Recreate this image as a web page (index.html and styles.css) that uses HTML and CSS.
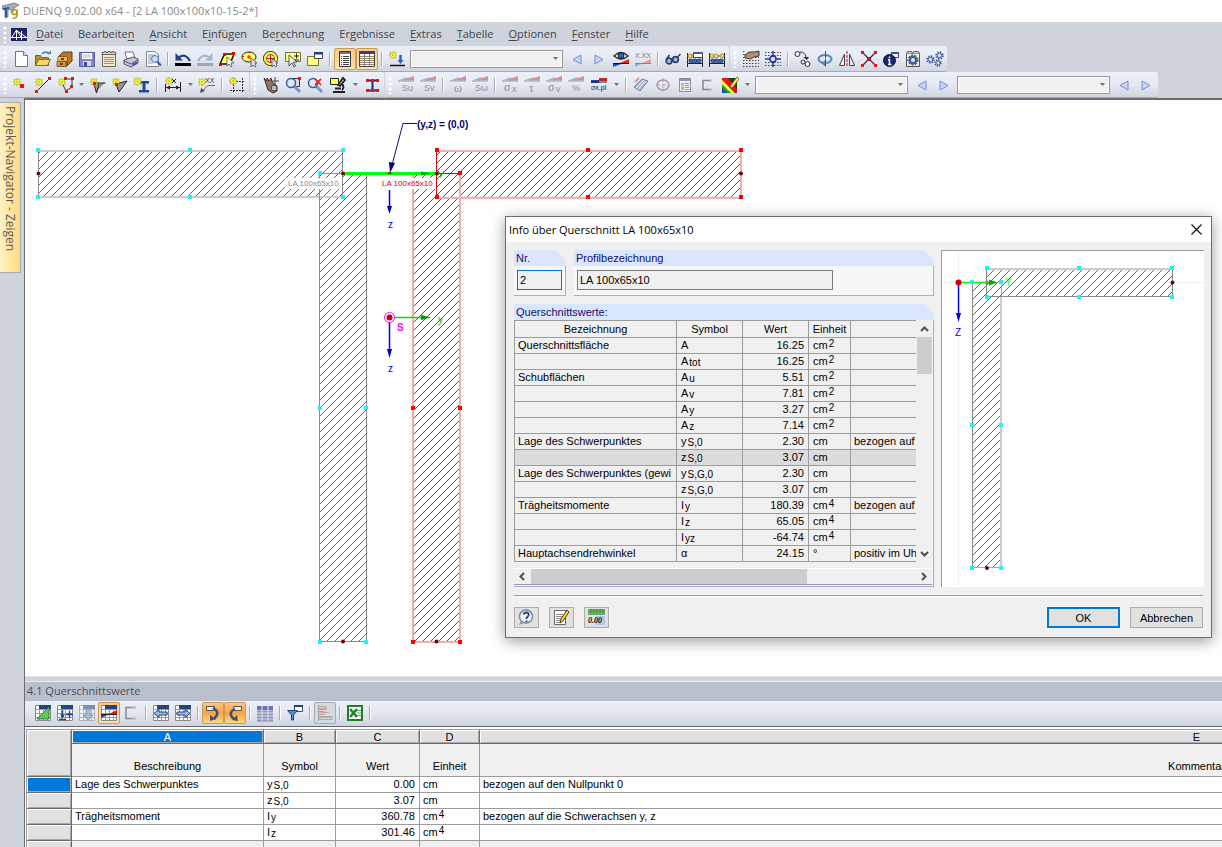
FILE: index.html
```html
<!DOCTYPE html>
<html lang="de">
<head>
<meta charset="utf-8">
<title>DUENQ 9.02.00 x64</title>
<link rel="stylesheet" href="styles.css">
</head>
<body>
<svg class="defs" aria-hidden="true">
  <defs>
    <symbol id="star" viewBox="0 0 9 9"><path d="M4.500 0L5.500 2.500 8 1 6.800 3.600 9 4.500 6.800 5.500 8 8 5.500 6.700 4.500 9 3.600 6.700 1 8 2.300 5.500 0 4.500 2.300 3.600 1 1 3.600 2.500Z" fill="#ffff38" stroke="#a9a612" stroke-width=".6"/><rect x="3.500" y="3.500" width="2" height="2" fill="#c9c51a"/></symbol>
    <symbol id="flag" viewBox="0 0 18 9"><path d="M1 4.500L10 1v3.500z" fill="#9fb4da"/><path d="M8 4.500V3L17 0v4.500z" fill="#d98f8f"/><path d="M1 5h16" stroke="#9aa0aa"/></symbol>
    <symbol id="prev" viewBox="0 0 18 18"><path d="M13 5L5 9.500 13 14z" fill="#c5d5fb" stroke="#7c8fce"/></symbol>
    <symbol id="next" viewBox="0 0 18 18"><path d="M5 5l8 4.500L5 14z" fill="#c5d5fb" stroke="#7c8fce"/></symbol>
    <symbol id="drop" viewBox="0 0 7 4"><path d="M0 0h7L3.500 4z" fill="#707070"/></symbol>
    <symbol id="sheet" viewBox="0 0 18 18"><path d="M1.500 1.500h15v15h-15z" fill="#fff" stroke="#888"/><path d="M1.500 5.500h15M1.500 9.500h15M1.500 13.500h15M5.500 1.500v15M9.500 1.500v15M13.500 1.500v15" stroke="#999"/><path d="M5 1h12v4H5z" fill="#24427f"/></symbol>
    <symbol id="lens" viewBox="0 0 18 18"><path d="M10 10l6 6" stroke="#7d94c8" stroke-width="3"/><circle cx="7" cy="7" r="4.500" fill="#dbe9fb" stroke="#365a9c" stroke-width="1.500"/></symbol>
    <symbol id="abacus" viewBox="0 0 18 18"><path d="M1.500 3v14M16.500 3v14M1 13.500h16" stroke="#222" fill="none"/><path d="M1 6h16M1 10h16" stroke="#555"/><g fill="#f0dd6a" stroke="#8a7a1f" stroke-width=".7"><circle cx="4" cy="6" r="2"/><circle cx="8" cy="6" r="2"/><circle cx="14" cy="6" r="2"/></g><g fill="#3b66c4" stroke="#16306d" stroke-width=".7"><circle cx="5" cy="11" r="2"/><circle cx="9" cy="11" r="2"/><circle cx="13" cy="11" r="2"/></g></symbol>
    <symbol id="gear" viewBox="0 0 10 10"><circle cx="5" cy="5" r="3.700" fill="none" stroke="#3a5795" stroke-width="2" stroke-dasharray="1.500 1.400"/><circle cx="5" cy="5" r="2.500" fill="#b9cdf3" stroke="#3a5795"/><circle cx="5" cy="5" r="1" fill="#fff"/></symbol>
    <pattern id="hatch" width="8" height="8" patternUnits="userSpaceOnUse"><path d="M-1 9L9-1" stroke="#222" stroke-width=".7" shape-rendering="auto"/></pattern>
    <pattern id="hatch-red" width="8" height="8" patternUnits="userSpaceOnUse"><path d="M-1 9L9-1" stroke="#7b0a14" stroke-width=".8" shape-rendering="auto"/></pattern>
  </defs>
</svg>

<header class="titlebar">
  <svg width="18" height="18" viewBox="0 0 18 18"><path d="M0 4l12-3 5 2-5 3v3l-3 1V7L6 8v7l-3 1V8L0 7z" fill="#a9adb3" stroke="#666a70" stroke-width=".7"/><path d="M1 7l6-1M4 7v8" stroke="#2b59b0" stroke-width="2"/><circle cx="12.500" cy="10" r="2.500" fill="none" stroke="#c59320" stroke-width="1.700"/><path d="M15 8v6q-1 3-4.500 2" fill="none" stroke="#c59320" stroke-width="1.700"/></svg>
  <h1>DUENQ 9.02.00 x64 - [2 LA 100x100x10-15-2*]</h1>
</header>

<nav class="menubar">
  <i class="grip"></i>
  <svg width="16" height="13" viewBox="0 0 16 13"><path d="M0 0h16v13H0z" fill="#20225f"/><path d="M0 9.500h16M5.500 2v10M10.500 3v9M1 9l4.500-7L10 9M6 3l9 6" fill="none" stroke="#fff"/></svg>
  <a href="#"><u>D</u>atei</a><a href="#">Bearbeite<u>n</u></a><a href="#"><u>A</u>nsicht</a><a href="#">E<u>i</u>nfügen</a><a href="#">Be<u>r</u>echnung</a><a href="#">Er<u>g</u>ebnisse</a><a href="#"><u>E</u>xtras</a><a href="#"><u>T</u>abelle</a><a href="#"><u>O</u>ptionen</a><a href="#"><u>F</u>enster</a><a href="#"><u>H</u>ilfe</a>
</nav>

<div class="toolrow">
  <div class="toolbar">
    <i class="grip"></i>
    <button class="tb" aria-label="Neu"><svg viewBox="0 0 18 18"><path d="M3.500 1.500h8l4 4v11h-12z" fill="#fff" stroke="#707684"/><path d="M11.500 1.500v4h4" fill="#dde3ee" stroke="#707684"/></svg></button>
    <button class="tb" aria-label="Öffnen"><svg viewBox="0 0 18 18"><path d="M1.500 15.500V5.500h5l1 2h7v8z" fill="#b8912c" stroke="#7b6018"/><path d="M1.500 15.500l3-6h12l-3 6z" fill="#f3d56d" stroke="#8a6c1e"/><path d="M8 4q4-4 7 0" fill="none" stroke="#4878b8" stroke-width="1.500"/><path d="M13 4h4v-3.500z" fill="#4878b8"/></svg></button>
    <button class="tb" aria-label="Projekt"><svg viewBox="0 0 18 18"><path d="M2 7l5-5h9v9l-5 5H2z" fill="#b57628" stroke="#65400f"/><path d="M2 7h9v9" fill="none" stroke="#65400f"/><path d="M2 7h9v4H2z" fill="#e4b164"/><path d="M1 11.500h9v5H1z" fill="#d69843" stroke="#65400f" stroke-width=".7"/><path d="M5 9h3M4 14h3" stroke="#3d2607" stroke-width="1.500"/></svg></button>
    <button class="tb" aria-label="Speichern"><svg viewBox="0 0 18 18"><path d="M1.500 2.500h15v14h-15z" fill="#8287cf" stroke="#555c9d"/><path d="M4 3h10v6H4z" fill="#fff"/><path d="M5 5h8M5 7h8" stroke="#b7bac8"/><path d="M5 11h8v5H5z" fill="#d9dbe6"/><path d="M6 12h3v4H6z" fill="#474c88"/></svg></button>
    <button class="tb" aria-label="Protokoll"><svg viewBox="0 0 18 18"><path d="M2.500 4.500h13v12h-13z" fill="#f6ead2" stroke="#6e655b"/><path d="M2 4.500V2.500h2v-1h2v1h2v-1h2v1h2v-1h2v1h2v2z" fill="#d6d1c8" stroke="#6e655b"/><path d="M4 7.500h10M4 9.500h10M4 11.500h10M4 13.500h10" stroke="#9c8e78"/></svg></button>
    <button class="tb" aria-label="Drucken"><svg viewBox="0 0 18 18"><path d="M3 2h8l2 6-8 1z" fill="#fff" stroke="#6d6d74"/><path d="M2 10l9-3 5 2v4l-7 4-7-3z" fill="#c3c5d2" stroke="#525462"/><path d="M2 11l7 3 7-4" fill="none" stroke="#555869"/><path d="M10 14l5-2.500v2L11 16z" fill="#504fa0"/></svg></button>
    <button class="tb" aria-label="Druckvorschau"><svg viewBox="0 0 18 18"><path d="M2.500 1.500h8l4 3v12h-12z" fill="#fff" stroke="#808690"/><path d="M4 5h7M4 7h4M4 9h3M4 11h3M4 13h5" stroke="#8f949c"/><circle cx="11" cy="9" r="3.500" fill="#c9def7" stroke="#4877b5"/><path d="M13 11.500l4 4" stroke="#2e62ad" stroke-width="2"/></svg></button>
    <i class="sep"></i>
    <button class="tb" aria-label="Rückgängig"><svg viewBox="0 0 18 18"><path d="M4 8q7-6 12 3" fill="none" stroke="#23407f" stroke-width="2.200"/><path d="M1.500 3v7.500H9z" fill="#23407f"/><path d="M1 13h16v3H1z" fill="#000"/></svg></button>
    <button class="tb" aria-label="Wiederholen"><svg viewBox="0 0 18 18"><path d="M14 8Q7 2 2 11" fill="none" stroke="#a4b7d3" stroke-width="2.200"/><path d="M16.500 3v7.500H9z" fill="#a4b7d3"/><path d="M1 13h16v3H1z" fill="#a1a5ad"/></svg></button>
    <button class="tb" aria-label="Auswahl Rhomboid"><svg viewBox="0 0 18 18"><path d="M6.500 4H16l-4 10H2z" fill="#ffff70" stroke="#111" stroke-width="1.500"/><path d="M5 3h3v3H5zM14 2h3v3h-3zM1 13h3v3H1z" fill="#e00"/><path d="M9 7v9l2-2 2 3 1-1-1-3h3z" fill="#fff" stroke="#444" stroke-width=".7"/></svg></button>
    <button class="tb" aria-label="Auswahl Ellipse"><svg viewBox="0 0 18 18"><ellipse cx="9" cy="7" rx="7" ry="5" fill="#ffff70" stroke="#222"/><path d="M9 5v4M7 7h4M2 6.500h2M8.500 2.500h2" stroke="#e00"/><path d="M11 8v9l2-2 2 2 1-1-1-3h2z" fill="#ddd" stroke="#444" stroke-width=".7"/></svg></button>
    <button class="tb" aria-label="Auswahl Kreis"><svg viewBox="0 0 18 18"><circle cx="8.500" cy="8.500" r="5.500" fill="#fff" stroke="#222" stroke-width="4"/><circle cx="8.500" cy="8.500" r="5.500" fill="none" stroke="#ffef3a" stroke-width="2.500"/><path d="M8.500 5v7M5 8.500h7" stroke="#e00"/><path d="M10 9v8l2-2 2 2 1-1-1-3h2z" fill="#ddd" stroke="#444" stroke-width=".7"/></svg></button>
    <button class="tb" aria-label="Auswahl hinzufügen"><svg viewBox="0 0 18 18"><path d="M1.500 2.500h15v9h-15z" fill="#ffff7d" stroke="#77743b"/><path d="M10 6h5M12.500 3.500v5M10 10h5" stroke="#222"/><path d="M5 5v11l3-3 2 4 1.500-1-2-4H13z" fill="#eee" stroke="#333" stroke-width=".8"/></svg></button>
    <button class="tb" aria-label="Fenster"><svg viewBox="0 0 18 18"><path d="M1.500 6.500h11v9h-11z" fill="#ffff7d" stroke="#77743b"/><path d="M8.500 2.500h8v6h-8z" fill="#fff" stroke="#444"/><path d="M8 2h9v2.500H8z" fill="#24427f"/></svg></button>
    <i class="sep"></i>
    <button class="tb on" aria-label="Navigator"><svg viewBox="0 0 18 18"><path d="M3.500 1.500h11v15h-11z" fill="#fff" stroke="#333"/><path d="M4 2h10v2H4z" fill="#777"/><path d="M5 6.500h1M5 8.500h1M5 10.500h1M5 12.500h1M5 14.500h1M7 6.500h6M7 8.500h6M7 10.500h6M7 12.500h6M7 14.500h6" stroke="#444"/></svg></button>
    <button class="tb on" aria-label="Tabellen"><svg viewBox="0 0 18 18"><path d="M1.500 1.500h15v15h-15z" fill="#fff" stroke="#444"/><path d="M1 1h16v3H1z" fill="#39456d"/><path d="M2 6.500h14M2 8.500h14M2 10.500h14M2 12.500h14M2 14.500h14M6.500 4v12M11.500 4v12" stroke="#8d8574"/></svg></button>
    <i class="sep"></i>
    <button class="tb" aria-label="Lastfall"><svg viewBox="0 0 18 18"><use href="#star" x="1" y="1" width="8" height="8"/><path d="M12.500 5v5" stroke="#3460b5" stroke-width="2.500"/><path d="M9.500 10h6l-3 4z" fill="#3460b5"/><path d="M2 15.500h15" stroke="#111" stroke-width="1.500"/></svg></button>
    <span class="combo"><select aria-label="Lastfall wählen"></select><svg viewBox="0 0 7 4"><use href="#drop"/></svg></span>
    <button class="tb" aria-label="Zurück"><svg viewBox="0 0 18 18"><use href="#prev"/></svg></button>
    <button class="tb" aria-label="Weiter"><svg viewBox="0 0 18 18"><use href="#next"/></svg></button>
    <button class="tb" aria-label="Ergebnisse anzeigen"><svg viewBox="0 0 18 18"><path d="M2 6q7-7 14 0-7 6-14 0z" fill="#fff" stroke="#222" stroke-width="1.300"/><circle cx="9" cy="5.500" r="3" fill="#3165bd" stroke="#111"/><path d="M1 15.500v-2h10L1 17z" fill="#2644c8"/><path d="M8 13l9-4v4z" fill="#e22"/><path d="M1 13.500h16" stroke="#111"/></svg></button>
    <button class="tb" aria-label="Werte anzeigen"><svg viewBox="0 0 18 18"><text x="1" y="8" class="t7" fill="#777">X.XX</text><path d="M1 17v-4h9z" fill="#a3add8"/><path d="M8 13l9-4v4z" fill="#e79a9a"/><path d="M1 13.500h16" stroke="#888"/></svg></button>
    <i class="sep"></i>
    <button class="tb" aria-label="Brille"><svg viewBox="0 0 18 18"><circle cx="5" cy="11" r="2.800" fill="#a9bde4" stroke="#2c3f70" stroke-width="1.800"/><circle cx="11.500" cy="9.500" r="2.800" fill="#a9bde4" stroke="#2c3f70" stroke-width="1.800"/><path d="M2.500 9l3-4M13.500 7l3-3M8 9h1" stroke="#2c3f70" stroke-width="1.500"/></svg></button>
    <button class="tb" aria-label="Berechnung Fenster"><svg viewBox="0 0 18 18"><use href="#abacus"/><path d="M7.500 2.500h9v5h-9z" fill="#fff" stroke="#444"/><path d="M7 2h10v2H7z" fill="#555d78"/></svg></button>
    <button class="tb" aria-label="Berechnung"><svg viewBox="0 0 18 18"><use href="#abacus"/></svg></button>
  </div>
  <div class="toolbar">
    <i class="grip"></i>
    <button class="tb" aria-label="Raster bearbeiten"><svg viewBox="0 0 18 18"><path d="M1 7.500h16M1 10.500h16M1 13.500h16M1 16.500h16M1 4.500h4M1 1.500h3" stroke="#444" stroke-dasharray="1.500 1.500"/><path d="M3 5l4-3h6l4-1v5l-5 1-4 2-5-1z" fill="#b38e70" stroke="#4d3526"/></svg></button>
    <button class="tb" aria-label="Raster"><svg viewBox="0 0 18 18"><path d="M1 2.500h16M1 5.500h16M1 12.500h16M1 15.500h16" stroke="#444" stroke-dasharray="1.500 1.500"/><path d="M9 1v16M1 9h16" stroke="#2434a4" stroke-width="1.500"/><circle cx="9" cy="9" r="3" fill="#dfe5f5" stroke="#2434a4" stroke-width="1.500"/></svg></button>
    <i class="sep"></i>
    <button class="tb" aria-label="Verschieben"><svg viewBox="0 0 18 18"><g fill="#eee" stroke="#333"><circle cx="3.500" cy="4" r="2.500"/><circle cx="13.500" cy="14" r="2.500"/><circle cx="9" cy="12" r="2"/></g><path d="M6 2q5 0 6 5" fill="none" stroke="#333"/><path d="M9 7h6l-2 3z" fill="#333"/></svg></button>
    <button class="tb" aria-label="Drehen"><svg viewBox="0 0 18 18"><ellipse cx="9" cy="9" rx="6.500" ry="4" fill="none" stroke="#5f86be" stroke-width="2"/><path d="M10 10l-5 3 5 4z" fill="#5f86be"/><path d="M9.500 1v16" stroke="#e00" stroke-dasharray="3 1"/></svg></button>
    <button class="tb" aria-label="Spiegeln"><svg viewBox="0 0 18 18"><path d="M6.500 4v11.500H1.500zM11.500 4v11.500h5z" fill="#eee" stroke="#444"/><path d="M9 1v16" stroke="#e00" stroke-dasharray="3 1"/></svg></button>
    <button class="tb" aria-label="Skalieren"><svg viewBox="0 0 18 18"><path d="M2 2l14 14M16 2L2 16" stroke="#333" stroke-width="1.300"/><path d="M1 1h3v3H1zM14 1h3v3h-3zM1 14h3v3H1zM14 14h3v3h-3z" fill="#e11"/><path d="M7.500 7.500h3v3h-3z" fill="#e11" stroke="#600" stroke-width=".6"/></svg></button>
    <button class="tb" aria-label="Info"><svg viewBox="0 0 18 18"><path d="M9.500 2.500h7v5h-7z" fill="#fff" stroke="#444"/><path d="M9 2h8v2H9z" fill="#3c5186"/><circle cx="7.500" cy="10.500" r="6" fill="#19266c" stroke="#0d1442"/><path d="M7.500 6.500v1.800M7.500 9.500v5M6 14.500h3.500M6 9.700h2" stroke="#fff" stroke-width="1.500"/></svg></button>
    <button class="tb" aria-label="Einstellungen"><svg viewBox="0 0 18 18"><path d="M2.500 3.500h13v13h-13z" fill="#f4ecd9" stroke="#555"/><path d="M2.500 3.500l1-2h4l1 2 1-2h5l1 2" fill="#d6d1c8" stroke="#666"/><circle cx="9" cy="10" r="4.500" fill="#3f5f9f"/><circle cx="9" cy="10" r="5" fill="none" stroke="#222a44" stroke-dasharray="2 1.500"/><circle cx="9" cy="10" r="2" fill="#dce7fa"/></svg></button>
    <button class="tb" aria-label="Optionen"><svg viewBox="0 0 18 18"><use href="#gear" x="0" y="5" width="9" height="9"/><use href="#gear" x="9" y="1" width="9" height="9"/><use href="#gear" x="8" y="9" width="8" height="8"/></svg></button>
  </div>
</div>

<div class="toolrow">
  <div class="toolbar">
    <i class="grip"></i>
    <button class="tb" aria-label="Knoten"><svg viewBox="0 0 18 18"><use href="#star" x="1" y="2" width="8" height="8"/><path d="M8 8h4v4H8z" fill="#e11"/></svg></button>
    <button class="tb" aria-label="Linie"><svg viewBox="0 0 18 18"><path d="M3 15L15 3" stroke="#222"/><use href="#star" x="1" y="2" width="8" height="8"/><path d="M14 1h3v3h-3zM1 14h3v3H1z" fill="#e11"/></svg></button>
    <button class="tb" aria-label="Element"><svg viewBox="0 0 18 18"><path d="M9 3h7v8l-6 4-3-6" fill="none" stroke="#333"/><use href="#star" x="2" y="2" width="8" height="8"/><path d="M8 1h3v3H8zM15 1h3v3h-3zM14 9h3v3h-3zM9 14h3v3H9z" fill="#e11"/></svg></button>
    <i class="arrow"><svg viewBox="0 0 7 4"><use href="#drop"/></svg></i>
    <button class="tb" aria-label="Querschnitt oben"><svg viewBox="0 0 18 18"><path d="M5 7h11L7 16z" fill="#999" stroke="none"/><path d="M5 7h11.500M5 8l2.500 9L10 8" fill="none" stroke="#222"/><use href="#star" x="1" y="2" width="8" height="8"/><path d="M4 6h3v3H4z" fill="#e11"/></svg></button>
    <button class="tb" aria-label="Querschnitt unten"><svg viewBox="0 0 18 18"><path d="M5 8L16 5 8 16z" fill="#999" stroke="#222"/><use href="#star" x="1" y="2" width="8" height="8"/><path d="M4 7h3v3H4z" fill="#e11"/></svg></button>
    <button class="tb" aria-label="Profil"><svg viewBox="0 0 18 18"><path d="M6 5h10v2.500h-3.500V14H16v2.500H6V14h3.500V7.500H6z" fill="#23489a"/><use href="#star" x="0" y="1" width="9" height="9"/></svg></button>
    <i class="sep"></i>
    <button class="tb wide" aria-label="Bemaßung"><svg viewBox="0 0 18 18"><path d="M1.500 8v8M16.500 6v10M2 11.500h14M8 3l4 4M12 3L8 7" stroke="#222"/><path d="M2 11.500l4-2v4zM16 11.500l-4-2v4z" fill="#222"/><use href="#star" x="1" y="1" width="8" height="8"/></svg></button>
    <i class="arrow"><svg viewBox="0 0 7 4"><use href="#drop"/></svg></i>
    <button class="tb" aria-label="Kommentar"><svg viewBox="0 0 18 18"><text x="7" y="7" class="t7" fill="#333">XX</text><path d="M17 9.500H10L3 16" fill="none" stroke="#666"/><path d="M2 17l1-5 4 3z" fill="#555"/><use href="#star" x="0" y="2" width="8" height="8"/></svg></button>
    <i class="sep"></i>
    <button class="tb" aria-label="Hilfslinien"><svg viewBox="0 0 18 18"><path d="M5.500 2v15M14.500 2v15M2 5.500h15M2 14.500h15" stroke="#333" stroke-dasharray="2 1"/><use href="#star" x="1" y="1" width="8" height="8"/></svg></button>
  </div>
  <div class="toolbar">
    <i class="grip"></i>
    <button class="tb" aria-label="Ansicht verschieben"><svg viewBox="0 0 18 18"><path d="M2 2l3 3V2l2 3 2-3 1 4 5 4v5l-4 2-5-3z" fill="#8c7565" stroke="#3e322b"/><circle cx="12" cy="12" r="3" fill="#bbb" stroke="#444"/><path d="M13 1v9M9 5h8" stroke="#444"/></svg></button>
    <button class="tb" aria-label="Fenster vergrößern"><svg viewBox="0 0 18 18"><path d="M6.500 2.500h9v8h-9z" fill="#ddd" stroke="#333"/><use href="#lens"/><path d="M14 1h3v3h-3z" fill="#e11"/></svg></button>
    <button class="tb" aria-label="Alles zeigen"><svg viewBox="0 0 18 18"><use href="#lens"/><path d="M9 9l6-6M9 3l6 6" stroke="#e11" stroke-width="1.700"/></svg></button>
    <button class="tb wide" aria-label="Modell"><svg viewBox="0 0 18 18"><path d="M9 9l5-7 2 2-5 6zM13 8q3 3 0 6" fill="none" stroke="#222" stroke-width="1.800"/><path d="M4 16h12M6 12.500h6" stroke="#222" stroke-width="2"/><path d="M1.500 2.500h8v6h-8z" fill="#ffff55" stroke="#222"/></svg></button>
    <i class="arrow"><svg viewBox="0 0 7 4"><use href="#drop"/></svg></i>
    <button class="tb" aria-label="Querschnitt"><svg viewBox="0 0 18 18"><path d="M4 4.500h11M4 14.500h11M9.500 5v9" stroke="#1b2a7a" stroke-width="2"/><path d="M3 3h3v3H3zM8 3h3v3H8zM13 3h3v3h-3zM3 13h3v3H3zM8 13h3v3H8zM13 13h3v3h-3z" fill="#e11"/></svg></button>
  </div>
  <div class="toolbar">
    <i class="grip"></i>
    <button class="tb" aria-label="Su"><svg viewBox="0 0 18 18"><use href="#flag" width="18" height="9"/><text x="5" y="15" class="t9">Su</text></svg></button>
    <button class="tb" aria-label="Sv"><svg viewBox="0 0 18 18"><use href="#flag" width="18" height="9"/><text x="5" y="15" class="t9">Sv</text></svg></button>
    <i class="sep"></i>
    <button class="tb" aria-label="Omega"><svg viewBox="0 0 18 18"><use href="#flag" width="18" height="9"/><text x="5" y="16" class="t12">ω</text></svg></button>
    <button class="tb" aria-label="S Omega"><svg viewBox="0 0 18 18"><use href="#flag" width="18" height="9"/><text x="4" y="15" class="t9">Sω</text></svg></button>
    <i class="sep"></i>
    <button class="tb" aria-label="Sigma x"><svg viewBox="0 0 18 18"><use href="#flag" width="18" height="9"/><text x="3" y="15" class="t12">σ</text><text x="11" y="16" class="t9">x</text></svg></button>
    <button class="tb" aria-label="Tau"><svg viewBox="0 0 18 18"><use href="#flag" width="18" height="9"/><text x="6" y="16" class="t12">τ</text></svg></button>
    <button class="tb" aria-label="Sigma v"><svg viewBox="0 0 18 18"><use href="#flag" width="18" height="9"/><text x="3" y="15" class="t12">σ</text><text x="11" y="16" class="t9">v</text></svg></button>
    <button class="tb" aria-label="Prozent"><svg viewBox="0 0 18 18"><use href="#flag" width="18" height="9"/><text x="5" y="15" class="t9">%</text></svg></button>
    <button class="tb wide" aria-label="Sigma x plastisch"><svg viewBox="0 0 18 18"><path d="M1 4h8v3H1z" fill="#23489a"/><path d="M9 2h8v3H9z" fill="#c9281f"/><path d="M1 6h16" stroke="#222"/><text x="1" y="14" class="t7 dark">σx,pl</text></svg></button>
    <i class="arrow"><svg viewBox="0 0 7 4"><use href="#drop"/></svg></i>
    <i class="sep"></i>
    <button class="tb" aria-label="Diagramm"><svg viewBox="0 0 18 18"><path d="M2 11l8-8 6 2-8 10z" fill="#aebbd0" stroke="#74829b"/><path d="M4 12l8-8M6 13l8-8" stroke="#e8edf5"/><path d="M3 6l4-4" stroke="#d99" stroke-width="2"/></svg></button>
    <button class="tb" aria-label="Kern"><svg viewBox="0 0 18 18"><ellipse cx="9" cy="9" rx="6" ry="5" fill="none" stroke="#999" stroke-width="1.300"/><path d="M9 2v14M2 9h14" stroke="#c99" stroke-dasharray="4 2"/></svg></button>
    <button class="tb" aria-label="Farbskala"><svg viewBox="0 0 18 18"><path d="M3.500 2.500h11v13h-11z" fill="#eef0f5" stroke="#8b8f98"/><path d="M4 3h10v2H4z" fill="#8e9ab5"/><path d="M5 7h3v2H5z" fill="#e99"/><path d="M5 9h3v2H5z" fill="#dd8"/><path d="M5 11h3v3H5z" fill="#8c9"/><path d="M9 7.500h4M9 9.500h4M9 11.500h4M9 13.500h4" stroke="#999"/></svg></button>
    <button class="tb" aria-label="Profil offen"><svg viewBox="0 0 18 18"><path d="M14 4.500H5v9h9" fill="none" stroke="#888" stroke-width="1.500"/><path d="M12 4.500h2M12 13.500h2" stroke="#ccc" stroke-width="2"/></svg></button>
    <button class="tb wide" aria-label="Farben"><svg viewBox="0 0 18 18"><path d="M1 2h15v15H1z" fill="#14401c"/><path d="M1 2h6l9 11v4L1 5z" fill="#e11"/><path d="M1 4l13 13H9L1 9z" fill="#ff3"/><path d="M1 8l9 9H6l-5-5z" fill="#1fa43a"/><path d="M1 12l5 5H1z" fill="#24b"/><path d="M16 1l-6 8-1 3 3-1 6-8z" fill="#ffe56a" stroke="#775a10" stroke-width=".8"/></svg></button>
    <i class="arrow"><svg viewBox="0 0 7 4"><use href="#drop"/></svg></i>
    <span class="combo"><select aria-label="Ergebnisart"></select><svg viewBox="0 0 7 4"><use href="#drop"/></svg></span>
    <button class="tb" aria-label="Zurück"><svg viewBox="0 0 18 18"><use href="#prev"/></svg></button>
    <button class="tb" aria-label="Weiter"><svg viewBox="0 0 18 18"><use href="#next"/></svg></button>
    <span class="combo"><select aria-label="Stelle"></select><svg viewBox="0 0 7 4"><use href="#drop"/></svg></span>
    <button class="tb" aria-label="Zurück"><svg viewBox="0 0 18 18"><use href="#prev"/></svg></button>
    <button class="tb" aria-label="Weiter"><svg viewBox="0 0 18 18"><use href="#next"/></svg></button>
  </div>
</div>

<div class="main">
  <aside class="rail"><button class="navtab">Projekt-Navigator - Zeigen</button></aside>
  <div class="work">
    <section class="canvas">
      <svg class="drawing" width="1197" height="576" viewBox="25 100 1197 576">
        <g shape-rendering="crispEdges">
          <path d="M38.500 150.500H343v47H38.500zM343 174h23.500v467.500H319.500V197H343z" fill="url(#hatch)"/>
          <path d="M38 150.500h305M38 196.500h305" stroke="#ccc" stroke-width="2"/>
          <path d="M38.500 150v47M319.500 174v467M366.500 174v467M319 641.500h47M319 173.500h24M342.500 150v47" stroke="#8d8d8d" fill="none"/>
          <path d="M436.500 150.500H741v47H436.500zM413.500 174h23v23h23.500v444.500h-46.500z" fill="url(#hatch-red)"/>
          <path d="M437 150.500h304M437 197.500h304M740.500 150v47M413 174v467M460 174v467M413 641.500h47" stroke="#f2aeb2" stroke-width="2"/>
          <path d="M436.500 150v47M437 173.500h23" stroke="#e00000"/>
        </g>
        <path d="M285 178h57v11h-57zM380 178h56v11h-56z" fill="#fff"/>
        <text x="288" y="186" class="lbl gray">LA 100x65x10</text>
        <text x="382" y="186" class="lbl red">LA 100x65x10</text>
        <path d="M343 173.500h94" stroke="#0f0" stroke-width="3"/><path d="M421 171.500l9 2-9 2z" fill="#009a00"/>
        <path d="M438 171l3 4M444 171l-4 7" stroke="#00d000"/>
        <g fill="#22f2f7"><path d="M36 148h4v4h-4zM188 148h4v4h-4zM341 148h4v4h-4zM36 195h4v4h-4zM188 195h4v4h-4zM341 195h4v4h-4zM318 171h4v4h-4zM318 406h4v4h-4zM364 406h4v4h-4zM318 640h4v4h-4zM364 640h4v4h-4z"/></g>
        <g fill="#f00"><path d="M435 148h4v4h-4zM586 148h4v4h-4zM739 148h4v4h-4zM435 195h4v4h-4zM586 195h4v4h-4zM739 195h4v4h-4zM458 171h4v4h-4zM411 406h4v4h-4zM458 406h4v4h-4zM411 640h4v4h-4zM458 640h4v4h-4z"/></g>
        <g fill="#700"><circle cx="38.500" cy="173.500" r="2"/><circle cx="343" cy="173.500" r="2"/><circle cx="437" cy="173.500" r="2"/><circle cx="741" cy="173.500" r="2"/><circle cx="343" cy="641.500" r="2"/><circle cx="436.500" cy="641.500" r="2"/></g>
        <path d="M417 123.500h-14L392 165" fill="none" stroke="#101078"/><path d="M389 162l6 1-5 10z" fill="#000080"/>
        <path d="M387 174q2-4 5 0z" fill="#d00"/>
        <text x="417" y="128" class="origin">(y,z) = (0,0)</text>
        <g stroke="#00f" stroke-width="1.500"><path d="M389.500 190v17M389.500 318v34"/></g>
        <path d="M387 206h5l-2.500 8zM387 349h5l-2.500 9z" fill="#0000c8"/>
        <text x="388" y="228" class="axis">z</text><text x="388" y="372" class="axis">z</text>
        <path d="M390 317.500h34" stroke="#0d0" stroke-width="1.500"/><path d="M421 315l10 2.500-10 2.500z" fill="#009a00"/>
        <text x="438" y="323" class="axis green">y</text>
        <circle cx="389.500" cy="317.500" r="5" fill="#fff" stroke="#f0f"/><circle cx="389.500" cy="317.500" r="3" fill="#c80010"/>
        <text x="397" y="331" class="cg">S</text>
      </svg>

      <section class="dialog" role="dialog" aria-labelledby="dlg-title">
        <header class="dlg-head"><h2 id="dlg-title">Info über Querschnitt LA 100x65x10</h2><button class="close" aria-label="Schließen"><svg width="11" height="11" viewBox="0 0 11 11"><path d="M.5.500l10 10M10.500.500l-10 10" stroke="#111" stroke-width="1.200"/></svg></button></header>
        <div class="dlg-body">
          <div class="left">
            <div class="pair">
              <div class="group nr"><label class="cap" for="nr">Nr.</label><div class="gbody"><input id="nr" class="focus" value="2"></div></div>
              <div class="group prof"><label class="cap" for="prof">Profilbezeichnung</label><div class="gbody"><input id="prof" value="LA 100x65x10" readonly></div></div>
            </div>
            <div class="group">
              <h3 class="cap">Querschnittswerte:</h3>
              <div class="tview">
                <table class="props">
                  <colgroup><col class="c1"><col class="c2"><col class="c2"><col class="c3"><col></colgroup>
                  <thead><tr><th>Bezeichnung</th><th>Symbol</th><th>Wert</th><th>Einheit</th><th></th></tr></thead>
                  <tbody>
                    <tr><td>Querschnittsfläche</td><td>A</td><td>16.25</td><td>cm<sup>2</sup></td><td></td></tr>
                    <tr><td></td><td>A<sub>tot</sub></td><td>16.25</td><td>cm<sup>2</sup></td><td></td></tr>
                    <tr><td>Schubflächen</td><td>A<sub>u</sub></td><td>5.51</td><td>cm<sup>2</sup></td><td></td></tr>
                    <tr><td></td><td>A<sub>v</sub></td><td>7.81</td><td>cm<sup>2</sup></td><td></td></tr>
                    <tr><td></td><td>A<sub>y</sub></td><td>3.27</td><td>cm<sup>2</sup></td><td></td></tr>
                    <tr><td></td><td>A<sub>z</sub></td><td>7.14</td><td>cm<sup>2</sup></td><td></td></tr>
                    <tr><td>Lage des Schwerpunktes</td><td>y<sub>S,0</sub></td><td>2.30</td><td>cm</td><td>bezogen auf</td></tr>
                    <tr class="cur"><td></td><td>z<sub>S,0</sub></td><td>3.07</td><td>cm</td><td></td></tr>
                    <tr><td>Lage des Schwerpunktes (gewi</td><td>y<sub>S,G,0</sub></td><td>2.30</td><td>cm</td><td></td></tr>
                    <tr><td></td><td>z<sub>S,G,0</sub></td><td>3.07</td><td>cm</td><td></td></tr>
                    <tr><td>Trägheitsmomente</td><td>I<sub>y</sub></td><td>180.39</td><td>cm<sup>4</sup></td><td>bezogen auf</td></tr>
                    <tr><td></td><td>I<sub>z</sub></td><td>65.05</td><td>cm<sup>4</sup></td><td></td></tr>
                    <tr><td></td><td>I<sub>yz</sub></td><td>-64.74</td><td>cm<sup>4</sup></td><td></td></tr>
                    <tr><td>Hauptachsendrehwinkel</td><td>α</td><td>24.15</td><td>°</td><td>positiv im Uhr</td></tr>
                  </tbody>
                </table>
                <div class="vscroll"><svg width="9" height="6" viewBox="0 0 9 6"><path d="M1 5l3.500-3.500L8 5" class="chev"/></svg><i></i><svg width="9" height="6" viewBox="0 0 9 6"><path d="M1 1l3.500 3.500L8 1" class="chev"/></svg></div>
              </div>
              <div class="hscroll"><svg width="6" height="9" viewBox="0 0 6 9"><path d="M5 1L1.500 4.500 5 8" class="chev"/></svg><i></i><svg width="6" height="9" viewBox="0 0 6 9"><path d="M1 1l3.500 3.500L1 8" class="chev"/></svg></div>
            </div>
          </div>
          <div class="preview">
            <svg width="262" height="334" viewBox="942 251 262 334">
              <path d="M942 282.500h262M958.500 251v334" stroke="#f1f1f1"/>
              <g shape-rendering="crispEdges">
                <path d="M987 268h185v28.500H987zM972.500 282.500H987v14h14v271h-28.500z" fill="url(#hatch)"/>
                <path d="M987 268.500h185M1000.500 297v271" stroke="#ccc" stroke-width="2"/>
                <path d="M987 296.500h185M986.500 268v29M1172.500 268v29M972.500 283v285" stroke="#888"/>
                <path d="M972 567.500h29M1001 282.500v14" stroke="#aaa"/>
              </g>
              <path d="M958 282.500h34" stroke="#0f0" stroke-width="1.500"/><path d="M989 279.500l9 3-9 3z" fill="#00b400"/>
              <path d="M958.500 283v34" stroke="#00f" stroke-width="1.500"/><path d="M956 313h5l-2.500 9z" fill="#0000c8"/>
              <path d="M985 266h4v4h-4zM1077 266h4v4h-4zM1170 266h4v4h-4zM985 295h4v4h-4zM1077 295h4v4h-4zM1170 295h4v4h-4zM970 280h4v4h-4zM999 280h4v4h-4zM970 423h4v4h-4zM999 423h4v4h-4zM970 566h4v4h-4zM999 566h4v4h-4z" fill="#22f2f7"/>
              <circle cx="1172.500" cy="282.500" r="2" fill="#700"/><circle cx="987" cy="568" r="2" fill="#700"/><circle cx="987" cy="282.500" r="2" fill="#a67a60"/>
              <circle cx="958.500" cy="282.500" r="3" fill="#c80010"/>
              <text x="1005" y="286" class="axis bright">Y</text><text x="955" y="336" class="axis">Z</text>
            </svg>
          </div>
        </div>
        <footer class="dlg-foot">
          <button class="sq" aria-label="Hilfe"><svg width="17" height="17" viewBox="0 0 17 17"><circle cx="8" cy="7.500" r="6.500" fill="#f4f6fb" stroke="#7c8798" stroke-width="1.500"/><path d="M3 12l-2 4 5-2z" fill="#8d97a6"/><path d="M5.500 5.500Q6 3.500 8.500 3.500q3 .5 2 3L8.500 9v1M8.500 11.500v1.500" fill="none" stroke="#20407f" stroke-width="1.800"/></svg></button>
          <button class="sq" aria-label="Kommentar"><svg width="17" height="17" viewBox="0 0 17 17"><path d="M1.500 1.500h11v14h-11z" fill="#fff" stroke="#666"/><path d="M3 5.500h7M3 7.500h6M3 9.500h5M3 11.500h4M3 13.500h4" stroke="#888"/><path d="M14 1l2 2-6 9-3 2 1-4z" fill="#ffd829" stroke="#4d3a05"/></svg></button>
          <button class="sq" aria-label="Einheiten"><svg width="17" height="17" viewBox="0 0 17 17"><path d="M.5.500h16v5h-16z" fill="#5cb55a" stroke="#418a40" stroke-width=".6"/><path d="M3 .5v3M6 .5v3M9 .5v3M12 .5v3M15 .5v3" stroke="#2f6e2f" stroke-width=".8"/><path d="M8 7h9v9H7z" fill="#b3c7ee"/><text x="0" y="14" class="units">0.00</text></svg></button>
          <span class="grow"></span>
          <button class="btn default">OK</button><button class="btn">Abbrechen</button>
        </footer>
      </section>
    </section>

    <section class="panel">
      <h2 class="panel-head">4.1 Querschnittswerte</h2>
      <div class="panel-tools">
        <button class="tb" aria-label="Tabelle bearbeiten"><svg viewBox="0 0 18 18"><use href="#sheet"/><path d="M3 15L15 3v12z" fill="#60c860" stroke="#2e832e"/></svg></button>
        <button class="tb" aria-label="Spalten"><svg viewBox="0 0 18 18"><use href="#sheet"/><path d="M6.500 6v6M3 15.500h7M10 10.500h7M13.500 7v7" stroke="#23407f" stroke-width="1.400"/><path d="M4 10.500h5l-2.500 4z" fill="#23407f"/></svg></button>
        <button class="tb" aria-label="Einfügen"><svg viewBox="0 0 18 18" opacity=".55"><use href="#sheet"/><path d="M8 5h4v6h3l-5 5-5-5h3z" fill="#7b9bd3" stroke="#456"/></svg></button>
        <button class="tb on" aria-label="Farbige Werte"><svg viewBox="0 0 18 18"><use href="#sheet"/><path d="M1 14l9-4H1z" fill="#2438c0"/><path d="M9 10l8-4v4z" fill="#e11"/><path d="M1 10.500h16" stroke="#222"/></svg></button>
        <button class="tb" aria-label="Profil"><svg viewBox="0 0 18 18"><path d="M13 3.500H4v11h9" fill="none" stroke="#888" stroke-width="1.500"/><path d="M10 3.500h4M10 14.500h4" stroke="#bbb" stroke-width="2"/></svg></button>
        <i class="sep"></i>
        <button class="tb" aria-label="Vorherige Tabelle"><svg viewBox="0 0 18 18"><use href="#sheet"/><path d="M2 9.500l5-4v2.500h8v3H7v2.500z" fill="#9db8f0" stroke="#23407f"/></svg></button>
        <button class="tb" aria-label="Nächste Tabelle"><svg viewBox="0 0 18 18"><use href="#sheet"/><path d="M16 9.500l-5-4v2.500H3v3h8v2.500z" fill="#9db8f0" stroke="#23407f"/></svg></button>
        <i class="sep"></i>
        <button class="tb hot" aria-label="Zur Grafik"><svg viewBox="0 0 18 18"><path d="M2.500 2.500h8v4h-8z" fill="#eee" stroke="#555"/><path d="M9 4q8 4 1 11" fill="none" stroke="#3c5276" stroke-width="2.500"/><path d="M6 11l6 4-6 2z" fill="#3c5276"/></svg></button>
        <button class="tb hot" aria-label="Zur Tabelle"><svg viewBox="0 0 18 18"><path d="M7.500 2.500h8v4h-8z" fill="#eee" stroke="#555"/><path d="M9 5q-8 4-1 10" fill="none" stroke="#3c5276" stroke-width="2.500"/><path d="M11 11l-5 5 6 1z" fill="#3c5276"/></svg></button>
        <i class="sep"></i>
        <button class="tb" aria-label="Zeilen"><svg viewBox="0 0 18 18"><path d="M1 2h16v4H1z" fill="#6c71b3"/><path d="M1 7.500h16M1 10.500h16M1 13.500h16M1 16.500h16" stroke="#8d91b8" stroke-width="2"/><path d="M6 2v15M12 2v15" stroke="#e2e5ee"/></svg></button>
        <i class="sep"></i>
        <button class="tb" aria-label="Filter"><svg viewBox="0 0 18 18"><path d="M8.500 1.500h8v6h-8z" fill="#fff" stroke="#444"/><path d="M8 1h9v2H8z" fill="#24427f"/><path d="M1.500 6.500h10l-4 4.500v5h-2v-5z" fill="#4f8ed2" stroke="#24427f"/></svg></button>
        <i class="sep"></i>
        <button class="tb off" aria-label="Diagramm"><svg viewBox="0 0 18 18"><path d="M2.500 1v16M3 2.500h7v3H3M3 7.500h5v3H3M3 12.500h13v3H3" fill="none" stroke="#a8a8a8"/><path d="M3 4.500h8M3 8.500h10M3 13.500h12" stroke="#d9a0a0"/></svg></button>
        <i class="sep"></i>
        <button class="tb" aria-label="Excel"><svg viewBox="0 0 18 18"><path d="M2 2h14v14H2z" fill="#fff" stroke="#267a2c" stroke-width="2"/><path d="M4 5h7v8H4z" fill="#e2f2e2"/><path d="M4 5l7 8M11 5l-7 8" stroke="#1d7d27" stroke-width="2.200"/><path d="M11 6.500h4M11 9h4M11 11.500h4" stroke="#57a55d"/></svg></button>
        <i class="sep"></i>
      </div>
      <div class="grid">
        <table>
          <colgroup><col class="g0"><col class="g1"><col class="g2"><col class="g3"><col class="g4"><col></colgroup>
          <thead>
            <tr class="letters"><th rowspan="2" class="corner"></th><th class="sel">A</th><th>B</th><th>C</th><th>D</th><th>E</th></tr>
            <tr class="names"><th>Beschreibung</th><th>Symbol</th><th>Wert</th><th>Einheit</th><th>Kommentar</th></tr>
          </thead>
          <tbody>
            <tr><th class="sel"></th><td>Lage des Schwerpunktes</td><td>y<sub>S,0</sub></td><td>0.00</td><td>cm</td><td>bezogen auf den Nullpunkt 0</td></tr>
            <tr><th></th><td></td><td>z<sub>S,0</sub></td><td>3.07</td><td>cm</td><td></td></tr>
            <tr><th></th><td>Trägheitsmoment</td><td>I<sub>y</sub></td><td>360.78</td><td>cm<sup>4</sup></td><td>bezogen auf die Schwerachsen y, z</td></tr>
            <tr><th></th><td></td><td>I<sub>z</sub></td><td>301.46</td><td>cm<sup>4</sup></td><td></td></tr>
            <tr class="empty"><th></th><td></td><td></td><td></td><td></td><td></td></tr>
          </tbody>
        </table>
      </div>
    </section>
  </div>
</div>
</body>
</html>
```
FILE: styles.css
```css
* { box-sizing: border-box; }
body {
  margin: 0;
  height: 100vh;
  display: flex;
  flex-direction: column;
  overflow: hidden;
  background: #cfd3dc;
  font: 11px/16px "Liberation Sans", Arial, sans-serif;
  color: #000;
}
h1, h2, h3 { margin: 0; font-size: inherit; font-weight: normal; }
button { font: inherit; color: inherit; padding: 0; border: 0; background: none; }
.defs { position: absolute; width: 0; height: 0; }

.titlebar { display: flex; align-items: center; gap: 3px; height: 22px; padding-left: 2px; background: #fff; }
.titlebar h1 { font: 11px/20px "Open Sans", sans-serif; color: #8b8b8b; }
.menubar { display: flex; align-items: center; gap: 1px; height: 24px; font: 11px/20px "Open Sans", sans-serif; }
.menubar svg { margin-right: 1px; }
.menubar a { color: #40454f; text-decoration: none; padding: 0 7px; }
.menubar u { text-underline-offset: 2px; }

.grip {
  flex: none;
  width: 10px;
  height: 18px;
  background: radial-gradient(circle at 5px 3px, #fff 1px, transparent 2px) 0 0 / 10px 5px;
}
.toolrow { display: flex; gap: 1px; height: 26px; }
.toolbar {
  display: flex;
  align-items: center;
  height: 26px;
  padding-right: 1px;
  border-bottom: 1px solid #a5a9b2;
  border-radius: 0 3px 3px 0;
  background: linear-gradient(#ebf0f9, #e4e9f2 50%, #d0d5df);
}
.tb { flex: none; display: flex; align-items: center; justify-content: center; width: 22px; height: 22px; border-radius: 2px; }
.tb svg { width: 18px; height: 18px; }
.tb.wide { width: 24px; }
.tb.on { border: 1px solid #c79a5e; background: linear-gradient(#fbc988, #fde3a8); }
.tb.hot { border: 1px solid #c79a5e; background: linear-gradient(#fdc58a, #f9a13e 50%, #fddc80); }
.tb.off { border: 1px solid #a5abb0; background: #d5dbdd; }
.sep { flex: none; width: 8px; height: 14px; background: linear-gradient(90deg, transparent 3px, #a5acba 3px, #a5acba 4px, #fff 4px, #fff 5px, transparent 5px); }
.arrow { flex: none; width: 11px; display: flex; justify-content: center; }
.arrow svg { width: 5px; height: 3px; }
.combo { position: relative; flex: none; width: 153px; height: 18px; margin: 0 3px 0 2px; }
.combo select { display: block; width: 100%; height: 100%; border: 1px solid #96979b; border-radius: 0; background: #f0f0f0; box-shadow: inset 0 0 0 1px #fff; appearance: none; }
.combo svg { position: absolute; right: 5px; top: 7px; width: 5px; height: 3px; }
.t7 { font: 7px "Liberation Sans", sans-serif; }
.t9 { font: 9px "Liberation Sans", sans-serif; fill: #8a9099; }
.t12 { font: 12px "Liberation Serif", serif; fill: #8a9099; }
.dark { fill: #222; }

.main { flex: 1; min-height: 0; display: flex; }
.rail { flex: none; width: 24px; padding-top: 4px; }
.navtab {
  width: 21px;
  height: 171px;
  padding-top: 3px;
  border: 1px solid #a5a9b4;
  border-left: 0;
  background: linear-gradient(90deg, #fff1c6, #ffdb7d);
  writing-mode: vertical-rl;
  text-align: left;
  font: 12px/16px "Open Sans", sans-serif;
  color: #5a5a5a;
}
.work { flex: 1; min-width: 0; display: flex; flex-direction: column; border-top: 2px solid #6d6d70; border-left: 1px solid #6d6d70; }
.canvas { position: relative; flex: none; background: #fff; border-bottom: 1px solid #e0e0e0; }
.drawing { display: block; }
.lbl { font: 8px "Liberation Sans", sans-serif; }
.gray { fill: #8a8a8a; }
.red { fill: #e00000; }
.origin { font: bold 10px "Liberation Sans", sans-serif; fill: #000070; }
.axis { font: 10px "Liberation Sans", sans-serif; fill: #00f; }
.axis.green { fill: #00b800; }
.axis.bright { fill: #0f0; }
.cg { font: bold 10px "Liberation Sans", sans-serif; fill: #f0f; }

.dialog {
  position: absolute;
  left: 480px;
  top: 116px;
  width: 707px;
  border: 1px solid #6e6e6e;
  background: #f0f0f0;
  box-shadow: 0 3px 14px rgba(0, 0, 0, .4);
}
.dlg-head { display: flex; justify-content: space-between; align-items: center; height: 25px; padding: 0 9px 0 3px; background: #fff; font: 11px/20px "Open Sans", sans-serif; }
.close { display: flex; }
.dlg-body { display: flex; gap: 7px; padding: 8px 7px 8px 8px; }
.left { flex: none; width: 420px; display: flex; flex-direction: column; gap: 8px; }
.pair { display: flex; gap: 8px; }
.nr { width: 52px; }
.prof { flex: 1; }
.group { border-bottom: 1px solid #a9a9e6; background: linear-gradient(#a9a9e6, #a9a9e6) right 12px / 1px 100% no-repeat; }
.cap {
  display: block;
  padding-left: 2px;
  line-height: 16px;
  color: #10106e;
  background: #dae5fe;
  clip-path: polygon(0 0, calc(100% - 10px) 0, 100% 10px, 100% 100%, 0 100%);
}
.gbody { margin-right: 1px; padding: 4px 3px 5px; background: #f7f7f7; }
input { display: block; width: 100%; height: 20px; padding: 0 2px; border: 1px solid #7a7a7a; background: #f0f0f0; font: inherit; }
.focus { border-color: #0078d7; }
.prof input { width: 256px; }

.tview { display: flex; gap: 1px; margin-right: 2px; }
table { border-collapse: separate; border-spacing: 0; table-layout: fixed; }
th, td { height: 16px; padding: 0 4px; font-weight: normal; line-height: 15px; white-space: nowrap; overflow: hidden; text-align: left; }
th { text-align: center; }
.props { width: 402px; border-left: 1px solid #9c9c9c; border-top: 1px solid #9c9c9c; }
.props th, .props td { border-right: 1px solid #9c9c9c; border-bottom: 1px solid #9c9c9c; }
.props td:first-child { padding-left: 3px; }
.props th:last-child, .props td:last-child { border-right: 0; padding: 0 0 0 3px; }
.props th { height: 17px; padding: 0; }
.props td:nth-child(3), .grid td:nth-child(4) { text-align: right; }
.c1 { width: 162px; }
.c2 { width: 66px; }
.c3 { width: 42px; }
.cur td { background: #dcdcdc; }
sub, sup { font-size: 10px; line-height: 0; margin-left: 1px; }
sub { vertical-align: -1px; }
sup { vertical-align: 2px; }
.vscroll { flex: none; width: 15px; display: flex; flex-direction: column; align-items: center; padding: 6px 0 5px; }
.vscroll i { width: 15px; height: 37px; margin: 5px 0 auto; background: #cdcdcd; }
.hscroll { display: flex; align-items: center; height: 17px; margin: 6px 2px 1px 0; padding: 0 5px; border-top: 1px solid #fff; border-bottom: 1px solid #9c9c9c; }
.hscroll i { width: 276px; height: 15px; margin: 0 auto 0 6px; background: #cdcdcd; }
.chev { fill: none; stroke: #505050; stroke-width: 2; }
.preview { flex: 1; min-width: 0; overflow: hidden; background: #fff; border-top: 1px solid #9c9c9c; border-left: 1px solid #9c9c9c; }
.preview svg { display: block; }
.dlg-foot { display: flex; align-items: center; gap: 10px; margin: 0 8px; padding: 11px 0 9px; border-top: 1px solid #9c9c9c; box-shadow: inset 0 1px #fff; }
.sq { width: 25px; height: 21px; display: flex; align-items: center; justify-content: center; border: 1px solid #adadad; background: #e1e1e1; }
.units { font: italic bold 8px "Liberation Serif", serif; fill: #111; }
.grow { flex: 1; }
.btn { width: 73px; height: 21px; border: 1px solid #adadad; background: #e1e1e1; }
.btn.default { border: 2px solid #0078d7; }

.panel { flex: 1; min-height: 0; display: flex; flex-direction: column; margin-top: 4px; border-top: 1px solid #e8edf6; }
.panel-head { flex: none; height: 19px; padding-left: 2px; font: 11px/18px "Open Sans", sans-serif; color: #4b4f57; background: #b9c0cb; }
.panel-tools { flex: none; display: flex; align-items: center; height: 25px; padding: 0 0 2px 7px; background: linear-gradient(#eaeff8, #e4e9f2 40%, #d0d5df); }
.grid { flex: 1; min-height: 0; overflow: hidden; padding: 2px 0 0 1px; border-top: 1px solid #666670; background: #fff; }
.grid table { width: 1888px; border-top: 1px solid #9c9c9c; border-left: 1px solid #9c9c9c; background: #fff; }
.g0 { width: 45px; }
.g1 { width: 192px; }
.g2 { width: 72px; }
.g3 { width: 84px; }
.g4 { width: 60px; }
.grid th, .grid td { border-right: 1px solid #9c9c9c; border-bottom: 1px solid #9c9c9c; }
.grid .letters th, .grid .corner, .grid tbody th { background: #e1e1e1; border-right-color: #6b6b6b; border-bottom-color: #6b6b6b; box-shadow: inset 1px 1px #fff, inset -1px -1px #a8a8a8; }
.grid td { padding-left: 3px; }
.letters th { height: 14px; line-height: 12px; padding: 0; }
.names th { height: 33px; padding: 13px 0 0; background: #f0f0f0; }
.grid .letters .sel, .grid tbody .sel { background: #0078d7; color: #fff; }
.empty td { background: #f0f0f0; }
```
